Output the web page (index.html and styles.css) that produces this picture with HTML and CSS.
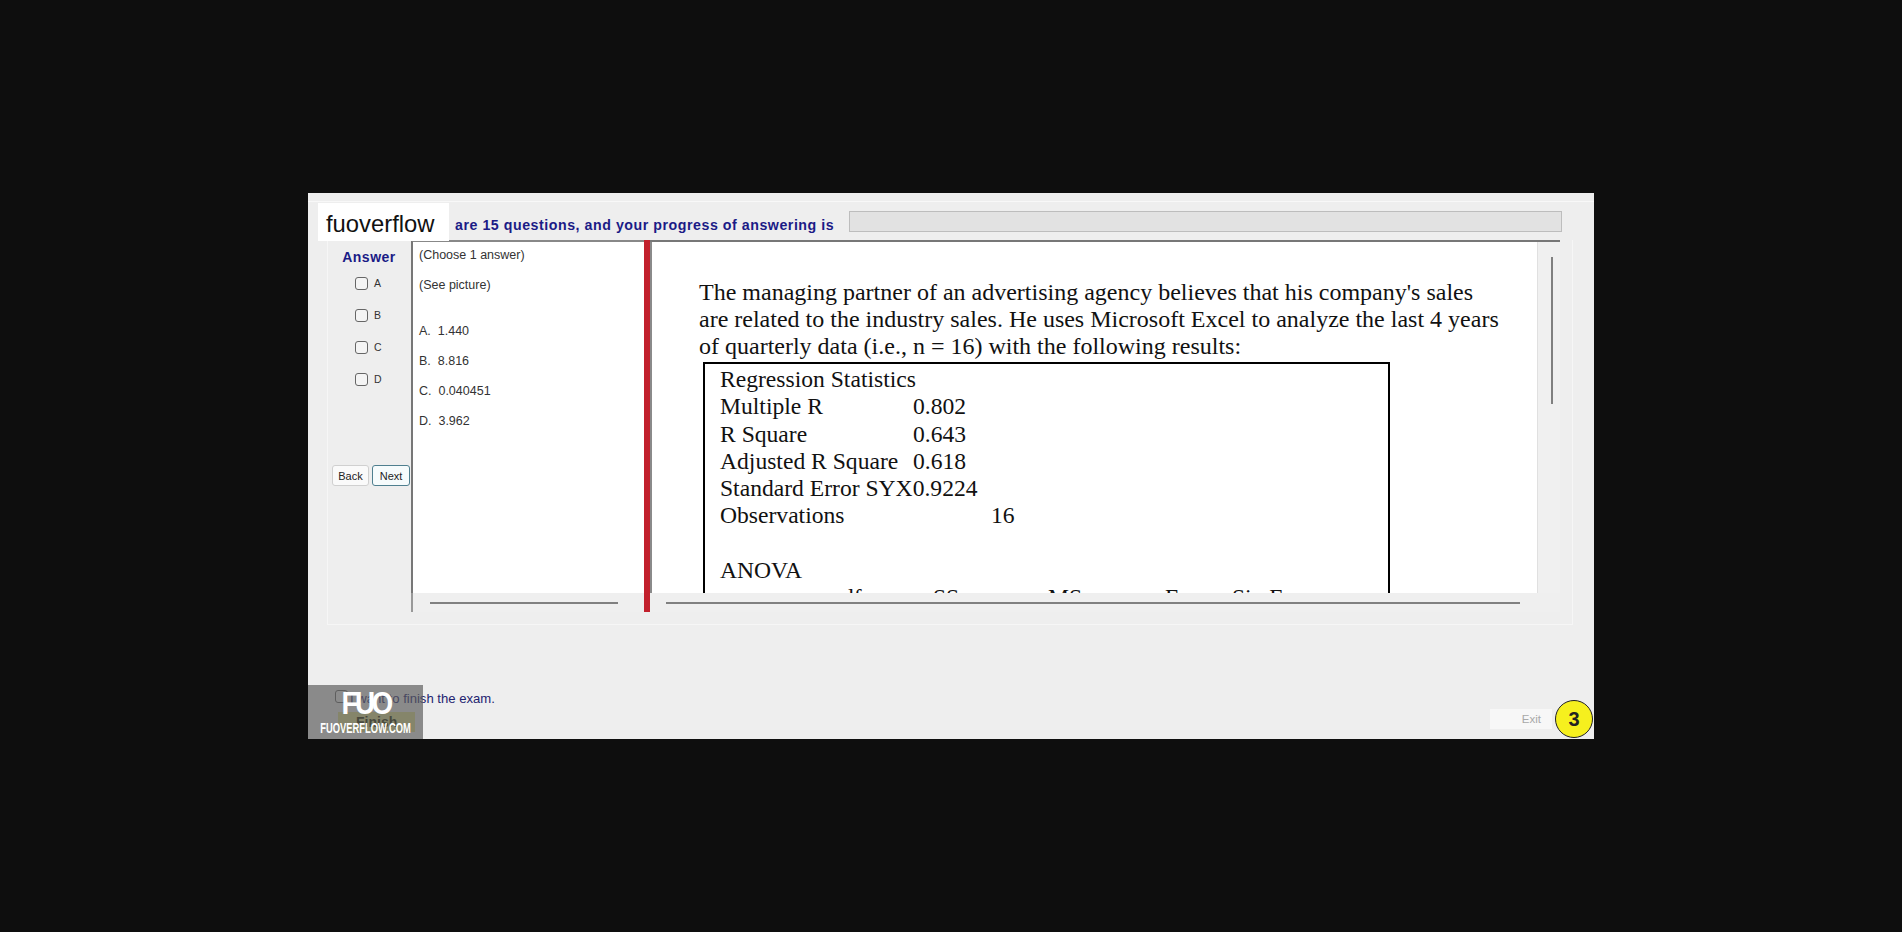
FILE: index.html
```html
<!DOCTYPE html>
<html lang="en">
<head>
    <meta charset="UTF-8">
    <meta name="viewport" content="width=device-width, initial-scale=1.0">
    <title>fuoverflow</title>
    <link rel="stylesheet" href="styles.css">
</head>
<body>
    <div class="window">
        <div class="top-strip"></div>
        <div class="header">
            <span class="progress-text">are 15 questions, and your progress of answering is</span>
            <div class="progress-bar"></div>
        </div>
        <div class="group">
            <div class="answer-col">
                <div class="answer-title">Answer</div>
                <div class="options">
                    <label class="option"><input type="checkbox">A</label>
                    <label class="option"><input type="checkbox">B</label>
                    <label class="option"><input type="checkbox">C</label>
                    <label class="option"><input type="checkbox">D</label>
                </div>
                <div class="nav-buttons">
                    <button class="btn">Back</button>
                    <button class="btn btn-next">Next</button>
                </div>
            </div>
            <div class="question-panel">
                <div class="question-body">
                    <p class="q-first">(Choose 1 answer)</p>
                    <p class="q-see">(See picture)</p>
                    <p class="q-a">A.&nbsp; 1.440</p>
                    <p>B.&nbsp; 8.816</p>
                    <p>C.&nbsp; 0.040451</p>
                    <p>D.&nbsp; 3.962</p>
                </div>
                <div class="hscroll"><div class="hthumb q-thumb"></div></div>
            </div>
            <div class="splitter"></div>
            <div class="picture-panel">
                <div class="picture-top">
                    <div class="picture-view">
                        <div class="pic-text">
                            The managing partner of an advertising agency believes that his company's sales<br>
                            are related to the industry sales. He uses Microsoft Excel to analyze the last 4 years<br>
                            of quarterly data (i.e., n = 16) with the following results:
                        </div>
                        <div class="stats-box">
                            <div class="stat-row">Regression Statistics</div>
                            <div class="stat-row"><span class="k">Multiple R</span>0.802</div>
                            <div class="stat-row"><span class="k">R Square</span>0.643</div>
                            <div class="stat-row"><span class="k">Adjusted R Square</span>0.618</div>
                            <div class="stat-row">Standard Error SYX0.9224</div>
                            <div class="stat-row"><span class="k k-obs">Observations</span>16</div>
                            <div class="stat-row">&nbsp;</div>
                            <div class="stat-row">ANOVA</div>
                            <div class="stat-row anova-head">
                                <span class="c-df">df</span><span class="c-ss">SS</span><span class="c-ms">MS</span><span class="c-f">F</span><span>Sig F</span>
                            </div>
                        </div>
                    </div>
                    <div class="vscroll"><div class="vthumb"></div></div>
                </div>
                <div class="hscroll"><div class="hthumb pic-thumb"></div></div>
            </div>
        </div>
        <div class="footer">
            <div class="finish-col">
                <label class="finish-check"><input type="checkbox">I want to finish the exam.</label>
                <div class="finish-btn">Finish</div>
            </div>
            <div class="exit-btn">Exit</div>
        </div>

        <div class="logo-label">fuoverflow</div>
        <div class="watermark">
            <div class="wm-logo">FUO</div>
            <div class="wm-site">FUOVERFLOW.COM</div>
        </div>
        <div class="badge">3</div>
    </div>
</body>
</html>
```

FILE: styles.css
```css
html, body {
    margin: 0;
    padding: 0;
}
body {
    background-color: #0e0e0e;
    height: 932px;
    overflow: hidden;
    font-family: "Liberation Sans", Arial, sans-serif;
    padding: 193px 0 0 308px;
    box-sizing: border-box;
}
.window {
    position: relative;
    width: 1286px;
    height: 546px;
    background-color: #eeeeee;
    overflow: hidden;
}
.top-strip {
    height: 8px;
    border-bottom: 1px solid #f8f8f8;
}
.header {
    display: flex;
    align-items: center;
    height: 38px;
}
.progress-text {
    margin: 7px 0 0 147px;
    width: 394px;
    font-size: 14.2px;
    font-weight: bold;
    white-space: nowrap;
    color: #1b1b86;
    letter-spacing: 0.54px;
}
.progress-bar {
    width: 713px;
    height: 21px;
    background-color: #e2e2e2;
    border: 1px solid #bdbdbd;
    box-sizing: border-box;
}
.group {
    display: flex;
    height: 385px;
    margin: 0 21px 0 19px;
    border: 1px solid #f6f6f6;
    border-top: none;
    box-sizing: border-box;
    padding-bottom: 12px;
}
.answer-col {
    width: 83px;
    flex-shrink: 0;
    display: flex;
    flex-direction: column;
    align-items: center;
    padding-top: 9px;
    box-sizing: border-box;
}
.answer-title {
    font-size: 14px;
    font-weight: bold;
    color: #1b1b86;
    line-height: 16px;
    letter-spacing: 0.5px;
    margin-right: 1px;
}
.options {
    display: flex;
    flex-direction: column;
    gap: 18px;
    margin-top: 11px;
    width: 100%;
    padding-left: 27px;
    box-sizing: border-box;
}
.option {
    display: flex;
    align-items: center;
    height: 14px;
    font-size: 10.5px;
    color: #333;
}
.option input, .finish-check input {
    appearance: none;
    width: 13px;
    height: 13px;
    margin: 0 6px 0 0;
    background-color: #f4f4f4;
    border: 1px solid #666;
    border-radius: 3px;
    box-sizing: border-box;
}
.nav-buttons {
    display: flex;
    gap: 3px;
    margin-top: 79px;
    align-self: flex-start;
    padding-left: 4px;
}
.btn {
    width: 37px;
    height: 21px;
    padding: 0;
    font-family: inherit;
    font-size: 11px;
    color: #222;
    background-color: #fafafa;
    border: 1px solid #d0d0d0;
    border-radius: 3px;
}
.btn-next {
    width: 38px;
    border-color: #4f7f8f;
    background-color: #f6fbfc;
}
.question-panel {
    width: 233px;
    flex-shrink: 0;
    display: flex;
    flex-direction: column;
}
.question-body {
    flex: 1;
    background-color: #fff;
    border-left: 2px solid #777;
    border-top: 2px solid #888;
    padding-left: 6px;
    font-size: 12.5px;
    color: #333;
    box-sizing: border-box;
}
.question-body p {
    margin: 15px 0 0;
    line-height: 15px;
}
.question-body .q-first {
    margin-top: 6px;
}
.question-body .q-see {
    margin-top: 15px;
}
.question-body .q-a {
    margin-top: 31px;
}
.hscroll {
    height: 19px;
    flex-shrink: 0;
    background-color: #efefef;
    border-left: 2px solid #999;
    display: flex;
    align-items: center;
    box-sizing: border-box;
}
.hthumb {
    height: 2px;
    background-color: #808080;
}
.q-thumb {
    width: 188px;
    margin-left: 17px;
}
.pic-thumb {
    width: 854px;
    margin-left: 16px;
}
.picture-panel .hscroll {
    border-left: none;
}
.splitter {
    width: 6px;
    flex-shrink: 0;
    background-color: #c2202c;
}
.picture-panel {
    flex: 1;
    display: flex;
    flex-direction: column;
    min-width: 0;
    margin-right: 12px;
}
.picture-top {
    flex: 1;
    display: flex;
    min-height: 0;
    border-top: 2px solid #777;
}
.picture-view {
    flex: 1;
    overflow: hidden;
    background-color: #fff;
    border-left: 2px solid #8a8a8a;
    padding: 37px 0 0 47px;
    box-sizing: border-box;
    font-family: "Liberation Serif", "Times New Roman", serif;
    font-size: 24px;
    color: #111;
}
.pic-text {
    line-height: 27px;
    white-space: nowrap;
}
.stats-box {
    width: 687px;
    margin: 2px 0 0 4px;
    padding: 2px 0 0 15px;
    border: 2px solid #000;
    box-sizing: border-box;
    font-size: 23.6px;
}
.stat-row {
    line-height: 27.3px;
    white-space: nowrap;
}
.k {
    display: inline-block;
    width: 193px;
}
.k-obs {
    width: 271px;
}
.anova-head span {
    display: inline-block;
}
.c-df { margin-left: 122px; width: 91px; }
.c-ss { width: 115px; }
.c-ms { width: 117px; }
.c-f { width: 67px; }
.vscroll {
    width: 23px;
    flex-shrink: 0;
    background-color: #f0f0f0;
    border-left: 1px solid #e0e0e0;
    box-sizing: border-box;
    padding: 15px 0 0 13px;
}
.vthumb {
    width: 2px;
    height: 147px;
    background-color: #808080;
}
.footer {
    display: flex;
    justify-content: space-between;
    align-items: flex-end;
    height: 114px;
    padding: 0 42px 10px 27px;
    box-sizing: border-box;
}
.finish-check {
    display: flex;
    align-items: center;
    font-size: 13.1px;
    color: #232370;
}
.finish-check input {
    margin: 0 2px 3px 0;
}
.finish-col {
    display: flex;
    flex-direction: column;
}
.finish-btn {
    margin: 6px 0 -3px 3px;
    padding: 2px 18px;
    align-self: flex-start;
    font-size: 14px;
    font-weight: bold;
    color: #1f2600;
    background-color: #e0e08c;
}
.exit-btn {
    width: 62px;
    height: 20px;
    background-color: #f7f7f7;
    color: #a8a8a8;
    font-size: 11.5px;
    line-height: 20px;
    text-align: right;
    padding-right: 11px;
    box-sizing: border-box;
}
.logo-label {
    position: absolute;
    left: 10px;
    top: 10px;
    width: 131px;
    height: 38px;
    background-color: #fff;
    color: #111;
    font-size: 23.8px;
    line-height: 42px;
    padding-left: 8px;
    box-sizing: border-box;
}
.watermark {
    position: absolute;
    left: 0;
    top: 492px;
    width: 115px;
    height: 54px;
    background-color: rgba(90, 90, 90, 0.68);
    color: #fff;
    text-align: center;
    font-weight: bold;
}
.wm-logo {
    font-size: 31px;
    line-height: 30px;
    margin-top: 4px;
    letter-spacing: -4px;
    transform: scaleX(0.9);
}
.wm-site {
    font-size: 14px;
    line-height: 16px;
    margin: 1px -20px 0;
    transform: scaleX(0.67);
    white-space: nowrap;
}
.badge {
    position: absolute;
    left: 1247px;
    top: 507px;
    width: 38px;
    height: 38px;
    background-color: #f6f01e;
    border: 1px solid #222;
    border-radius: 50%;
    color: #222;
    font-size: 20px;
    font-weight: bold;
    line-height: 36px;
    text-align: center;
    box-sizing: border-box;
}
```
